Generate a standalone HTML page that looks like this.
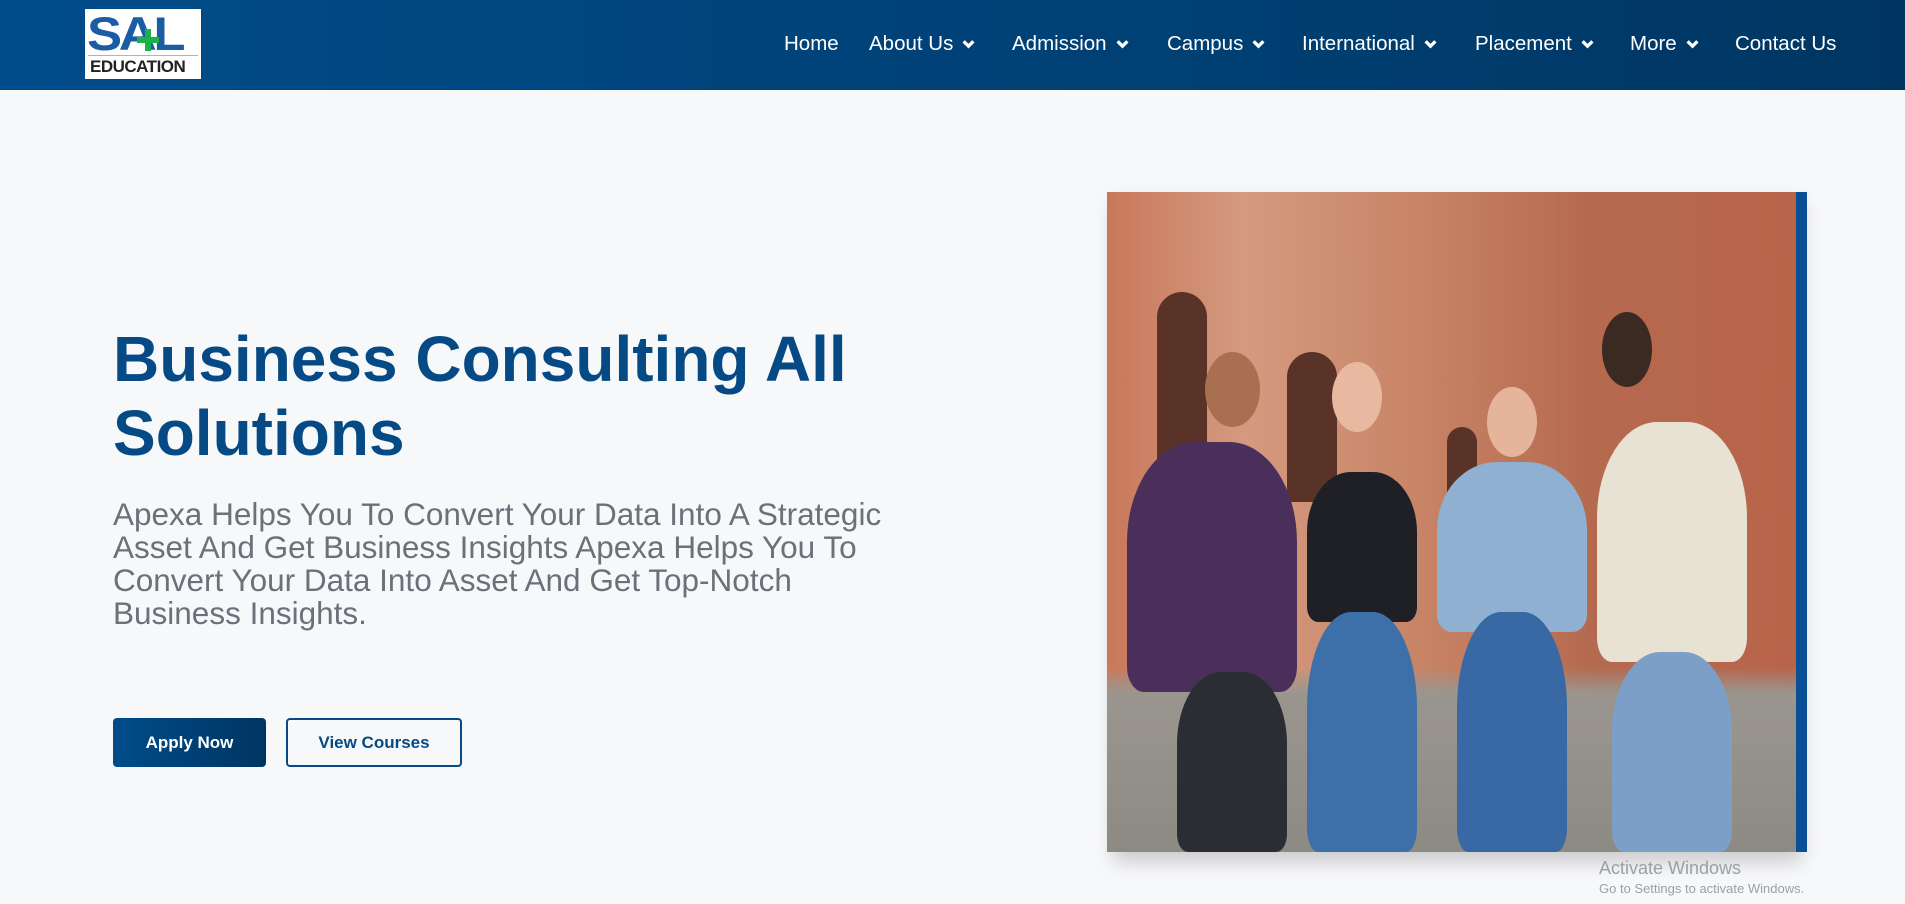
<!DOCTYPE html>
<html><head><meta charset="utf-8"><style>
*{margin:0;padding:0;box-sizing:border-box}
body{width:1905px;height:904px;overflow:hidden;background:#f7f8fa;font-family:"Liberation Sans",Arial,sans-serif;position:relative}
.hdr{position:absolute;left:0;top:0;width:1905px;height:90px;background:linear-gradient(90deg,#004c8a,#003e70 70%,#003562)}
.logo{position:absolute;left:85px;top:9px;width:116px;height:70px;background:#fff}
.logo .sal{position:absolute;left:2px;top:3px;font-weight:bold;font-size:47px;color:#1a5da5;letter-spacing:-3px;line-height:44px;transform:scaleX(1.12);transform-origin:left}
.logo .plus{position:absolute;left:52px;top:20px;width:22px;height:22px}
.logo .line{position:absolute;left:3px;top:46px;width:110px;height:1px;background:#9bb8d4}
.logo .edu{position:absolute;left:5px;top:48px;font-weight:bold;font-size:17px;color:#222;letter-spacing:-.5px}
.nav a{position:absolute;top:32px;color:#fff;font-size:20.5px;text-decoration:none;white-space:nowrap}
.nav svg{margin-left:9px;vertical-align:1px}
h1{position:absolute;left:113px;top:322px;font-size:64px;line-height:74px;color:#054a85;font-weight:bold;width:900px}
p{position:absolute;left:113px;top:498px;width:800px;font-size:31.5px;line-height:33px;color:#6b7079}
.b1{position:absolute;left:113px;top:718px;width:153px;height:49px;background:linear-gradient(90deg,#004c8a,#003562);color:#fff;border-radius:4px;font-weight:bold;font-size:17px;text-align:center;line-height:49px}
.b2{position:absolute;left:286px;top:718px;width:176px;height:49px;border:2px solid #054a85;color:#054a85;border-radius:4px;font-weight:bold;font-size:17px;text-align:center;line-height:45px}
.photo{position:absolute;left:1107px;top:192px;width:689px;height:660px;overflow:hidden;box-shadow:6px 10px 18px rgba(0,0,0,.18);
background:linear-gradient(180deg,rgba(0,0,0,0) 72%,#9a968f 76%,#8d8a84 100%),linear-gradient(90deg,#c9775a 0%,#d49a80 20%,#c88466 45%,#b56a4f 70%,#b8644a 100%)}
.bar{position:absolute;left:1796px;top:192px;width:11px;height:660px;background:#0a4f95}
.p{position:absolute;border-radius:40% 40% 10% 10%}
.act{position:absolute;left:1599px;top:858px;color:#9aa0a6;font-size:18px}
.act2{position:absolute;left:1599px;top:881px;color:#9aa0a6;font-size:13px}
</style></head><body>
<div class="hdr">
 <div class="logo"><div class="sal">SAL</div>
  <svg class="plus" viewBox="0 0 22 22"><path d="M8 0h6v8h8v6h-8v8H8v-8H0V8h8z" fill="#1bb14b"/></svg>
  <div class="line"></div><div class="edu">EDUCATION</div></div>
 <div class="nav">
  <a style="left:784px">Home</a>
  <a style="left:869px">About Us<svg width="13" height="10" viewBox="0 0 12 9"><path d="M1.5 2l4.5 4.5L10.5 2" stroke="#fff" stroke-width="3" fill="none"/></svg></a>
  <a style="left:1012px">Admission<svg width="13" height="10" viewBox="0 0 12 9"><path d="M1.5 2l4.5 4.5L10.5 2" stroke="#fff" stroke-width="3" fill="none"/></svg></a>
  <a style="left:1167px">Campus<svg width="13" height="10" viewBox="0 0 12 9"><path d="M1.5 2l4.5 4.5L10.5 2" stroke="#fff" stroke-width="3" fill="none"/></svg></a>
  <a style="left:1302px">International<svg width="13" height="10" viewBox="0 0 12 9"><path d="M1.5 2l4.5 4.5L10.5 2" stroke="#fff" stroke-width="3" fill="none"/></svg></a>
  <a style="left:1475px">Placement<svg width="13" height="10" viewBox="0 0 12 9"><path d="M1.5 2l4.5 4.5L10.5 2" stroke="#fff" stroke-width="3" fill="none"/></svg></a>
  <a style="left:1630px">More<svg width="13" height="10" viewBox="0 0 12 9"><path d="M1.5 2l4.5 4.5L10.5 2" stroke="#fff" stroke-width="3" fill="none"/></svg></a>
  <a style="left:1735px">Contact Us</a>
 </div>
</div>
<h1>Business Consulting All Solutions</h1>
<p>Apexa Helps You To Convert Your Data Into A Strategic Asset And Get Business Insights Apexa Helps You To Convert Your Data Into Asset And Get Top-Notch Business Insights.</p>
<div class="b1">Apply Now</div>
<div class="b2">View Courses</div>
<div class="photo">
 <div class="p" style="left:50px;top:100px;width:50px;height:190px;background:#5a3328;border-radius:25px 25px 0 0"></div>
 <div class="p" style="left:180px;top:160px;width:50px;height:150px;background:#5a3328;border-radius:25px 25px 0 0"></div>
 <div class="p" style="left:340px;top:235px;width:30px;height:80px;background:#5a3328;border-radius:15px 15px 0 0"></div>
 <div class="p" style="left:20px;top:250px;width:170px;height:250px;background:#4a2f5a"></div>
 <div class="p" style="left:70px;top:480px;width:110px;height:180px;background:#2a2d33"></div>
 <div class="p" style="left:98px;top:160px;width:55px;height:75px;background:#a86f50;border-radius:50%"></div>
 <div class="p" style="left:200px;top:280px;width:110px;height:150px;background:#1f2026"></div>
 <div class="p" style="left:200px;top:420px;width:110px;height:240px;background:#3d6fa8"></div>
 <div class="p" style="left:225px;top:170px;width:50px;height:70px;background:#e8b9a0;border-radius:50%"></div>
 <div class="p" style="left:330px;top:270px;width:150px;height:170px;background:#8fb0d0"></div>
 <div class="p" style="left:350px;top:420px;width:110px;height:240px;background:#3869a5"></div>
 <div class="p" style="left:380px;top:195px;width:50px;height:70px;background:#e5b49a;border-radius:50%"></div>
 <div class="p" style="left:490px;top:230px;width:150px;height:240px;background:#e8e2d4"></div>
 <div class="p" style="left:505px;top:460px;width:120px;height:200px;background:#7c9fc8"></div>
 <div class="p" style="left:495px;top:120px;width:50px;height:75px;background:#3a2a22;border-radius:50%"></div>
</div>
<div class="bar"></div>
<div class="act">Activate Windows</div>
<div class="act2">Go to Settings to activate Windows.</div>
</body></html>
